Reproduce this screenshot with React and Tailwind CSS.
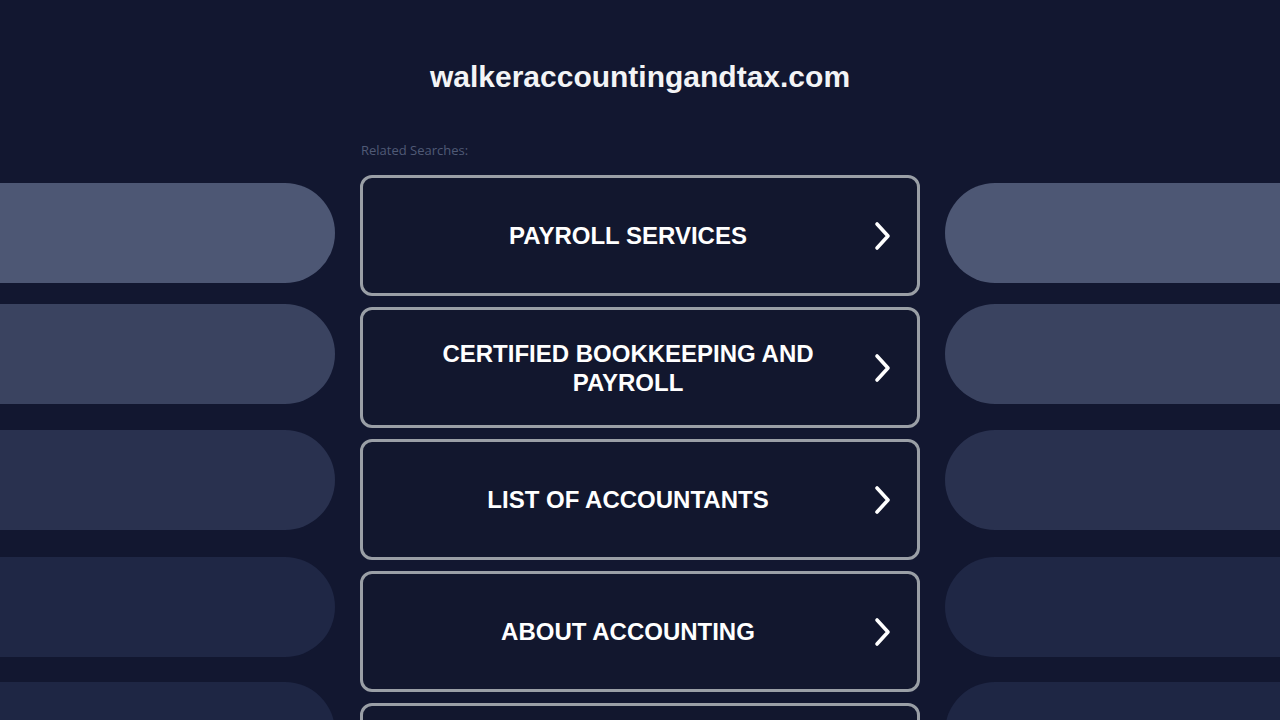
import React from "react";

const searches = [
	"PAYROLL SERVICES",
	"CERTIFIED BOOKKEEPING AND PAYROLL",
	"LIST OF ACCOUNTANTS",
	"ABOUT ACCOUNTING",
	"",
];

const pills = [
	{ color: "bg-[#4d5774]", mt: "mt-0" },
	{ color: "bg-[#3a4360]", mt: "mt-[21px]" },
	{ color: "bg-[#29314f]", mt: "mt-[26px]" },
	{ color: "bg-[#1f2745]", mt: "mt-[27px]" },
	{ color: "bg-[#1e2644]", mt: "mt-[25px]" },
];

const Chevron = () => (
	<svg width="18" height="30" viewBox="0 0 18 30" fill="none">
		<polyline
			points="3,3 14,15 3,27"
			stroke="white"
			strokeWidth="3.6"
			strokeLinecap="round"
			strokeLinejoin="round"
		/>
	</svg>
);

const SideColumn = ({ side }) => (
	<div className="flex flex-col pt-[183px]">
		{pills.map((p, i) => (
			<div
				key={i}
				className={`h-[100px] shrink-0 ${p.mt} ${p.color} ${
					side === "left" ? "rounded-r-full" : "rounded-l-full"
				}`}
			/>
		))}
	</div>
);

export default function App() {
	return (
		<div className="min-h-screen bg-[#121730] overflow-hidden">
			<div className="grid grid-cols-[335px_560px_335px] gap-x-[25px] h-[720px] overflow-hidden">
				<SideColumn side="left" />

				<div className="flex flex-col pt-[59px]">
					<h1 className="text-center text-[30px] leading-[36px] font-bold text-[#f3f4f6] font-['Liberation_Sans',Arial,sans-serif]">
						walkeraccountingandtax.com
					</h1>
					<p className="mt-[47px] pl-[1px] text-[13px] leading-4 text-[#505a76] font-['Open_Sans',sans-serif]">
						Related Searches:
					</p>
					<div className="mt-[17px] flex flex-col gap-[11px]">
						{searches.map((s, i) => (
							<div
								key={i}
								className="h-[121px] shrink-0 flex items-center border-[3px] border-[#9a9fa6] rounded-xl bg-[#12172e] pl-[35px] pr-[25px]"
							>
								<span className="flex-1 text-center text-[24px] leading-[29px] font-bold text-white font-['Liberation_Sans',Arial,sans-serif]">
									{s}
								</span>
								<span className="ml-4 flex items-center">
									<Chevron />
								</span>
							</div>
						))}
					</div>
				</div>

				<SideColumn side="right" />
			</div>
		</div>
	);
}
